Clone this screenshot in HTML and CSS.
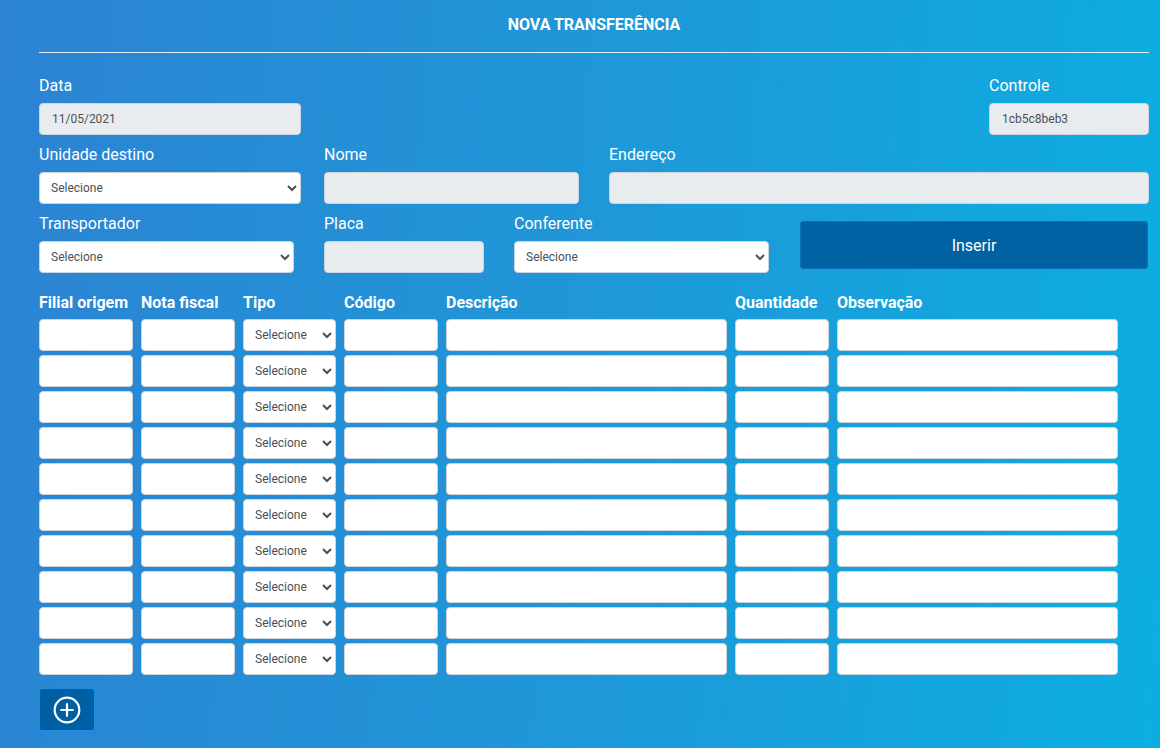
FILE: index.html
```html
<!DOCTYPE html>
<html lang="pt-BR">
<head>
<meta charset="utf-8">
<title>Nova Transferência</title>
<link rel="stylesheet" href="styles.css">
</head>
<body>
<div class="page">
  <header class="head">
    <h1 class="title">NOVA TRANSFERÊNCIA</h1>
  </header>

  <div class="row row-1">
    <div class="field w262">
      <label class="lbl">Data</label>
      <input class="ctl ro" type="text" value="11/05/2021" readonly>
    </div>
    <div class="field w160 push">
      <label class="lbl">Controle</label>
      <input class="ctl ro" type="text" value="1cb5c8beb3" readonly>
    </div>
  </div>

  <div class="row">
    <div class="field w262">
      <label class="lbl">Unidade destino</label>
      <select class="ctl sel"><option>Selecione</option></select>
    </div>
    <div class="field w255 ml23">
      <label class="lbl">Nome</label>
      <input class="ctl ro" type="text" readonly>
    </div>
    <div class="field w540 ml30">
      <label class="lbl">Endereço</label>
      <input class="ctl ro" type="text" readonly>
    </div>
  </div>

  <div class="row">
    <div class="field w255">
      <label class="lbl">Transportador</label>
      <select class="ctl sel"><option>Selecione</option></select>
    </div>
    <div class="field w160 ml30">
      <label class="lbl">Placa</label>
      <input class="ctl ro" type="text" readonly>
    </div>
    <div class="field w255 ml30">
      <label class="lbl">Conferente</label>
      <select class="ctl sel"><option>Selecione</option></select>
    </div>
    <div class="field w348 ml31">
      <button class="btn-insert" type="button">Inserir</button>
    </div>
  </div>

  <div class="grid" id="grid">
    <div class="th">Filial origem</div>
    <div class="th">Nota fiscal</div>
    <div class="th">Tipo</div>
    <div class="th">Código</div>
    <div class="th">Descrição</div>
    <div class="th">Quantidade</div>
    <div class="th">Observação</div>

    <input class="cell" type="text"><input class="cell" type="text"><select class="cell sel"><option>Selecione</option></select><input class="cell" type="text"><input class="cell" type="text"><input class="cell" type="text"><input class="cell" type="text">
    <input class="cell" type="text"><input class="cell" type="text"><select class="cell sel"><option>Selecione</option></select><input class="cell" type="text"><input class="cell" type="text"><input class="cell" type="text"><input class="cell" type="text">
    <input class="cell" type="text"><input class="cell" type="text"><select class="cell sel"><option>Selecione</option></select><input class="cell" type="text"><input class="cell" type="text"><input class="cell" type="text"><input class="cell" type="text">
    <input class="cell" type="text"><input class="cell" type="text"><select class="cell sel"><option>Selecione</option></select><input class="cell" type="text"><input class="cell" type="text"><input class="cell" type="text"><input class="cell" type="text">
    <input class="cell" type="text"><input class="cell" type="text"><select class="cell sel"><option>Selecione</option></select><input class="cell" type="text"><input class="cell" type="text"><input class="cell" type="text"><input class="cell" type="text">
    <input class="cell" type="text"><input class="cell" type="text"><select class="cell sel"><option>Selecione</option></select><input class="cell" type="text"><input class="cell" type="text"><input class="cell" type="text"><input class="cell" type="text">
    <input class="cell" type="text"><input class="cell" type="text"><select class="cell sel"><option>Selecione</option></select><input class="cell" type="text"><input class="cell" type="text"><input class="cell" type="text"><input class="cell" type="text">
    <input class="cell" type="text"><input class="cell" type="text"><select class="cell sel"><option>Selecione</option></select><input class="cell" type="text"><input class="cell" type="text"><input class="cell" type="text"><input class="cell" type="text">
    <input class="cell" type="text"><input class="cell" type="text"><select class="cell sel"><option>Selecione</option></select><input class="cell" type="text"><input class="cell" type="text"><input class="cell" type="text"><input class="cell" type="text">
    <input class="cell" type="text"><input class="cell" type="text"><select class="cell sel"><option>Selecione</option></select><input class="cell" type="text"><input class="cell" type="text"><input class="cell" type="text"><input class="cell" type="text">
  </div>

  <button class="btn-add" type="button" aria-label="Adicionar">
    <svg width="28" height="28" viewBox="0 0 28 28" fill="none" stroke="#fff" stroke-width="2.2" stroke-linecap="round">
      <circle cx="14" cy="14" r="12.3"/>
      <path d="M14 8.2v11.6M8.2 14h11.6"/>
    </svg>
  </button>
</div>
</body>
</html>
```

FILE: styles.css
```css
* { box-sizing: border-box; }

html, body {
  margin: 0;
  padding: 0;
}

body {
  width: 1160px;
  height: 748px;
  overflow: hidden;
  font-family: Roboto, "Liberation Sans", sans-serif;
  color: #fff;
  background: linear-gradient(95deg, #2c83d3 0%, #1f97d8 50%, #0caee1 100%);
}

.page {
  padding: 0 11px 0 39px;
}

.head {
  height: 53px;
  border-bottom: 1px solid rgba(255, 255, 255, 0.85);
}

.title {
  margin: 0;
  padding-top: 13px;
  font-size: 16px;
  line-height: 24px;
  font-weight: 700;
  text-align: center;
  color: #fff;
}

.row {
  display: flex;
  align-items: flex-start;
  margin-top: 7px;
}

.row-1 {
  margin-top: 20px;
}

.field {
  display: flex;
  flex-direction: column;
}

.push { margin-left: auto; }
.ml23 { margin-left: 23px; }
.ml30 { margin-left: 30px; }
.ml31 { margin-left: 31px; }

.w160 { width: 160px; }
.w255 { width: 255px; }
.w262 { width: 262px; }
.w348 { width: 348px; }
.w540 { width: 540px; }

.lbl {
  font-size: 16px;
  line-height: 24px;
  padding-top: 1px;
  margin-bottom: 5px;
  color: #fff;
}

.ctl, .cell {
  height: 32px;
  width: 100%;
  font-family: Roboto, "Liberation Sans", sans-serif;
  font-size: 12px;
  color: #495057;
  background-color: #fff;
  border: 1px solid #ced4da;
  border-radius: 4px;
  padding: 0 12px;
  outline: none;
  margin: 0;
}

.ro {
  background-color: #e9ecef;
}

.sel {
  padding: 0 7px;
}

.btn-insert {
  margin-top: 10px;
  height: 48px;
  width: 348px;
  background: #0062a3;
  border: 1px solid #0a6fb8;
  border-radius: 3px;
  color: #fff;
  font-family: Roboto, "Liberation Sans", sans-serif;
  font-size: 16px;
  cursor: pointer;
}

.grid {
  display: grid;
  grid-template-columns: 94px 94px 93px 94px 281px 94px 281px;
  column-gap: 8px;
  row-gap: 4px;
  margin-top: 17px;
}

.th {
  font-size: 16px;
  line-height: 24px;
  font-weight: 700;
  white-space: nowrap;
  padding-top: 1px;
  margin-bottom: 0;
}

.cell.sel {
  padding: 0 6px 0 7px;
}

.btn-add {
  display: flex;
  align-items: center;
  justify-content: center;
  margin-top: 13px;
  width: 56px;
  height: 43px;
  padding: 0;
  background: #005fa3;
  border: 1px solid #1a8fe6;
  border-radius: 3px;
  cursor: pointer;
}
```
